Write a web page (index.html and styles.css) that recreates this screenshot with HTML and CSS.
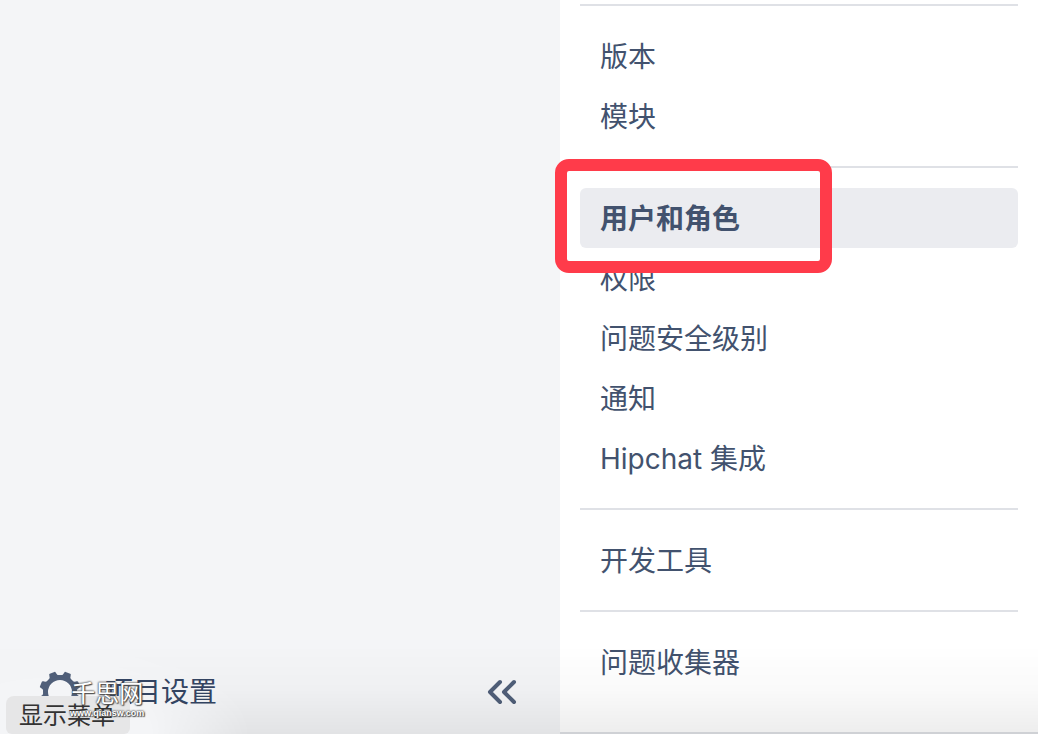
FILE: index.html
```html
<!DOCTYPE html>
<html lang="zh-CN">
<head>
  <meta charset="UTF-8" />
  <meta name="viewport" content="width=device-width, initial-scale=1.0" />
  <title>项目设置</title>
  <link rel="stylesheet" href="styles.css">
</head>
<body>

  <!-- === SIDEBAR === -->
  <aside class="sidebar">
    <div class="sidebar-footer">
      <a class="settings-link" href="#">
        <svg class="gear" viewBox="0 0 42 42" aria-hidden="true">
          <circle cx="21" cy="21" r="14.500" fill="none" stroke="currentColor" stroke-width="5"/>
          <g fill="currentColor">
            <path id="tooth" d="M15 6Q17.500 4 17.500 1.500Q17.500 0.300 18.500 0.300h5Q24.500 0.300 24.500 1.500Q24.500 4 27 6z" transform="rotate(22.500 21 21)"/>
            <use href="#tooth" transform="rotate(45 21 21)"/>
            <use href="#tooth" transform="rotate(90 21 21)"/>
            <use href="#tooth" transform="rotate(135 21 21)"/>
            <use href="#tooth" transform="rotate(180 21 21)"/>
            <use href="#tooth" transform="rotate(225 21 21)"/>
            <use href="#tooth" transform="rotate(270 21 21)"/>
            <use href="#tooth" transform="rotate(315 21 21)"/>
          </g>
        </svg>
        <span>项目设置</span>
      </a>
      <button class="collapse-btn" type="button" aria-label="收起">
        <svg viewBox="0 0 32 28" aria-hidden="true">
          <path d="M14 4L4 14l10 10M28 4L18 14l10 10" fill="none" stroke="currentColor" stroke-width="4" stroke-linecap="round" stroke-linejoin="round"/>
        </svg>
      </button>
    </div>
  </aside>

  <!-- === SETTINGS MENU === -->
  <nav class="settings-nav">
    <ul class="nav-group">
      <li><a href="#">版本</a></li>
      <li><a href="#">模块</a></li>
    </ul>
    <ul class="nav-group">
      <li class="marked"><a class="active" href="#">用户和角色</a></li>
      <li><a href="#">权限</a></li>
      <li><a href="#">问题安全级别</a></li>
      <li><a href="#">通知</a></li>
      <li><a href="#">Hipchat 集成</a></li>
    </ul>
    <ul class="nav-group">
      <li><a href="#">开发工具</a></li>
    </ul>
    <ul class="nav-group">
      <li><a href="#">问题收集器</a></li>
    </ul>
  </nav>

  <div class="bottom-shade"></div>
  <div class="status-tip">显示菜单</div>
  <div class="watermark">
    <span class="watermark-name">千思网</span>
    <span class="watermark-url">www.qiansw.com</span>
  </div>

</body>
</html>
```
FILE: styles.css
```css
*,
*::after {
  margin: 0;
  padding: 0;
  box-sizing: border-box;
}

body {
  display: flex;
  position: relative;
  min-height: 100vh;
  overflow: hidden;
  background: #fff;
  color: #42526e;
  font-family: Inter, "Noto Sans CJK SC", sans-serif;
  font-size: 28px;
  line-height: 62px;
}

a {
  color: inherit;
  text-decoration: none;
}

/* === SIDEBAR === */
.sidebar {
  display: flex;
  flex-direction: column;
  justify-content: flex-end;
  flex: 0 0 560px;
  background: #f4f5f7;
}

.sidebar-footer {
  display: flex;
  align-items: center;
  justify-content: space-between;
  padding: 0 42px 11px 39px;
}

.settings-link {
  display: flex;
  align-items: center;
  gap: 24px;
  color: #344563;
}

.gear {
  width: 42px;
  height: 42px;
  color: #505f79;
}

.collapse-btn {
  display: flex;
  border: none;
  background: none;
  color: #505f79;
  cursor: pointer;
}

.collapse-btn svg {
  width: 32px;
  height: 28px;
}

/* === SETTINGS MENU === */
.settings-nav {
  flex: 1;
  padding: 4px 20px 0;
  border-bottom: 2px solid #dfe1e6;
}

.nav-group {
  list-style: none;
  padding: 20px 0;
  border-top: 2px solid #dfe1e6;
}

.nav-group a {
  display: block;
  height: 60px;
  padding: 0 20px;
  border-radius: 6px;
}

.nav-group .active {
  background: #ebecf0;
  font-weight: 600;
}

.marked {
  position: relative;
}

/* red frame around the active entry */
.marked::after {
  content: "";
  position: absolute;
  top: -29px;
  left: -25px;
  width: 277px;
  height: 114px;
  border: 12px solid #ff3b4a;
  border-radius: 14px;
  pointer-events: none;
  z-index: 1;
}

/* === OVERLAYS === */
.bottom-shade {
  position: absolute;
  left: 0;
  right: 0;
  bottom: 0;
  height: 90px;
  background: linear-gradient(rgba(0, 0, 0, 0), rgba(0, 0, 0, 0.02) 50%, rgba(0, 0, 0, 0.07));
  -webkit-mask-image: radial-gradient(200px 100px at 50px 100%, transparent 50%, #000);
  mask-image: radial-gradient(200px 100px at 50px 100%, transparent 50%, #000);
  pointer-events: none;
}

.status-tip {
  position: absolute;
  left: 6px;
  bottom: 0;
  height: 38px;
  padding: 0 15px 0 13px;
  border-radius: 8px 8px 6px 6px;
  background: #e6e6e7;
  color: #333;
  font-size: 24px;
  line-height: 40px;
}

.watermark {
  position: absolute;
  left: 70px;
  bottom: 15px;
  display: flex;
  flex-direction: column;
  align-items: center;
  color: #fff;
  text-shadow: 0 0 2px #444, 0 0 2px #444, 1px 1px 1px #555;
}

.watermark-name {
  font-size: 24px;
  line-height: 26px;
}

.watermark-url {
  font-family: "Liberation Sans", sans-serif;
  font-size: 9px;
  font-weight: bold;
  line-height: 12px;
}
```
